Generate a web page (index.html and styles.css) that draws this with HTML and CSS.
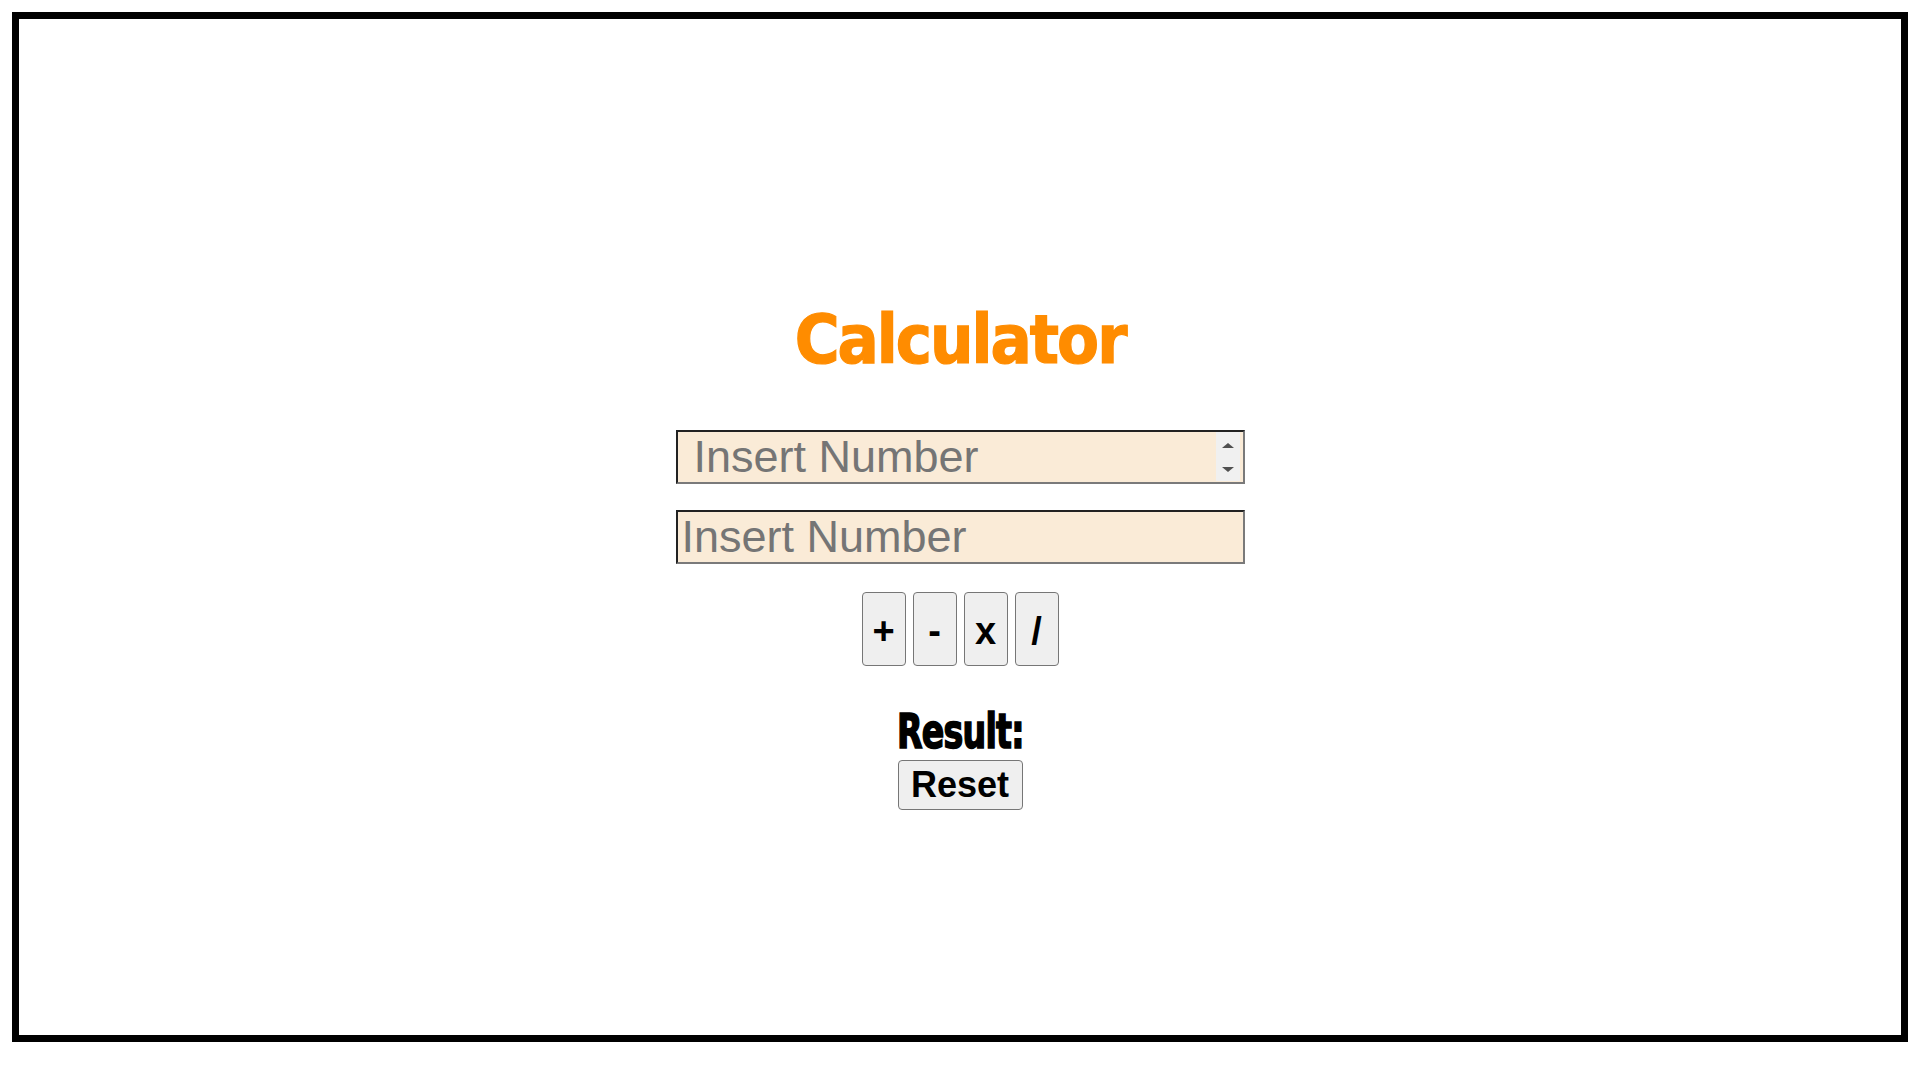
FILE: index.html
```html
<!DOCTYPE html>
<html lang="en">
<head>
<meta charset="utf-8">
<title>Calculator</title>
<link rel="stylesheet" href="styles.css">
</head>
<body>
<div class="frame">
  <h1 class="title">Calculator</h1>
  <div class="field field-number">
    <input class="num num-first" type="text" placeholder="Insert Number">
    <span class="spinner" aria-hidden="true">
      <svg class="arrow" width="12" height="5" viewBox="0 0 12 5"><polygon points="6,0 12,5 0,5" fill="#505050"/></svg>
      <svg class="arrow" width="12" height="5" viewBox="0 0 12 5"><polygon points="0,0 12,0 6,5" fill="#505050"/></svg>
    </span>
  </div>
  <div class="field">
    <input class="num num-second" type="text" placeholder="Insert Number">
  </div>
  <div class="ops">
    <button class="op">+</button>
    <button class="op">-</button>
    <button class="op">x</button>
    <button class="op">/</button>
  </div>
  <h2 class="result"><span class="result-text">Result:</span></h2>
  <button class="reset">Reset</button>
</div>
</body>
</html>
```

FILE: styles.css
```css
html, body {
  margin: 0;
  padding: 0;
  background: #ffffff;
}

.frame {
  margin: 12px;
  height: 1030px;
  box-sizing: border-box;
  border: 7px solid #000000;
  display: flex;
  flex-direction: column;
  align-items: center;
  padding-top: 281px;
}

.title {
  margin: 0 0 51px 0;
  font-family: "DejaVu Sans Condensed", "DejaVu Sans", sans-serif;
  font-stretch: condensed;
  font-weight: bold;
  font-size: 68px;
  line-height: 79px;
  letter-spacing: -2px;
  color: #ff8c00;
  -webkit-text-stroke: 1.2px #ff8c00;
}

.field {
  position: relative;
  width: 569px;
  height: 54px;
}

.field-number {
  margin-bottom: 26px;
}

.num {
  display: block;
  width: 100%;
  height: 54px;
  box-sizing: border-box;
  margin: 0;
  padding: 0 4px;
  border-style: solid;
  border-width: 2px;
  border-color: #222222 #7a7a7a #7a7a7a #222222;
  background: #faebd7;
  font-family: "Liberation Sans", Arial, sans-serif;
  font-size: 45px;
  color: #000000;
  outline: none;
}

.num-first {
  padding-left: 16px;
  padding-right: 30px;
}

.num::placeholder {
  color: #757575;
  opacity: 1;
}

.spinner {
  position: absolute;
  top: 2px;
  bottom: 3px;
  right: 5px;
  width: 24px;
  background: #f0f0f0;
  display: flex;
  flex-direction: column;
  align-items: center;
  justify-content: space-between;
  padding: 11px 0 9px 0;
  box-sizing: border-box;
}

.arrow {
  display: block;
}

.ops {
  display: flex;
  gap: 7px;
  margin-top: 28px;
}

.op {
  width: 44px;
  height: 74px;
  box-sizing: border-box;
  margin: 0;
  padding: 4px 0 0 0;
  border: 1px solid #767676;
  border-radius: 4px;
  background: #efefef;
  color: #000000;
  font-family: "Liberation Sans", Arial, sans-serif;
  font-weight: bold;
  font-size: 38px;
  line-height: 1;
}

.result {
  margin: 37px 0 1px 0;
  font-family: "DejaVu Sans Condensed", "DejaVu Sans", sans-serif;
  font-stretch: condensed;
  font-weight: bold;
  font-size: 48px;
  line-height: normal;
  color: #000000;
}

.result-text {
  display: inline-block;
  transform: scaleX(0.77);
  -webkit-text-stroke: 1.6px #000000;
  letter-spacing: -1px;
}

.reset {
  width: 125px;
  height: 50px;
  box-sizing: border-box;
  margin: 0;
  padding: 0;
  border: 1px solid #767676;
  border-radius: 4px;
  background: #efefef;
  color: #000000;
  font-family: "Liberation Sans", Arial, sans-serif;
  font-weight: bold;
  font-size: 36px;
  line-height: 1;
}
```
